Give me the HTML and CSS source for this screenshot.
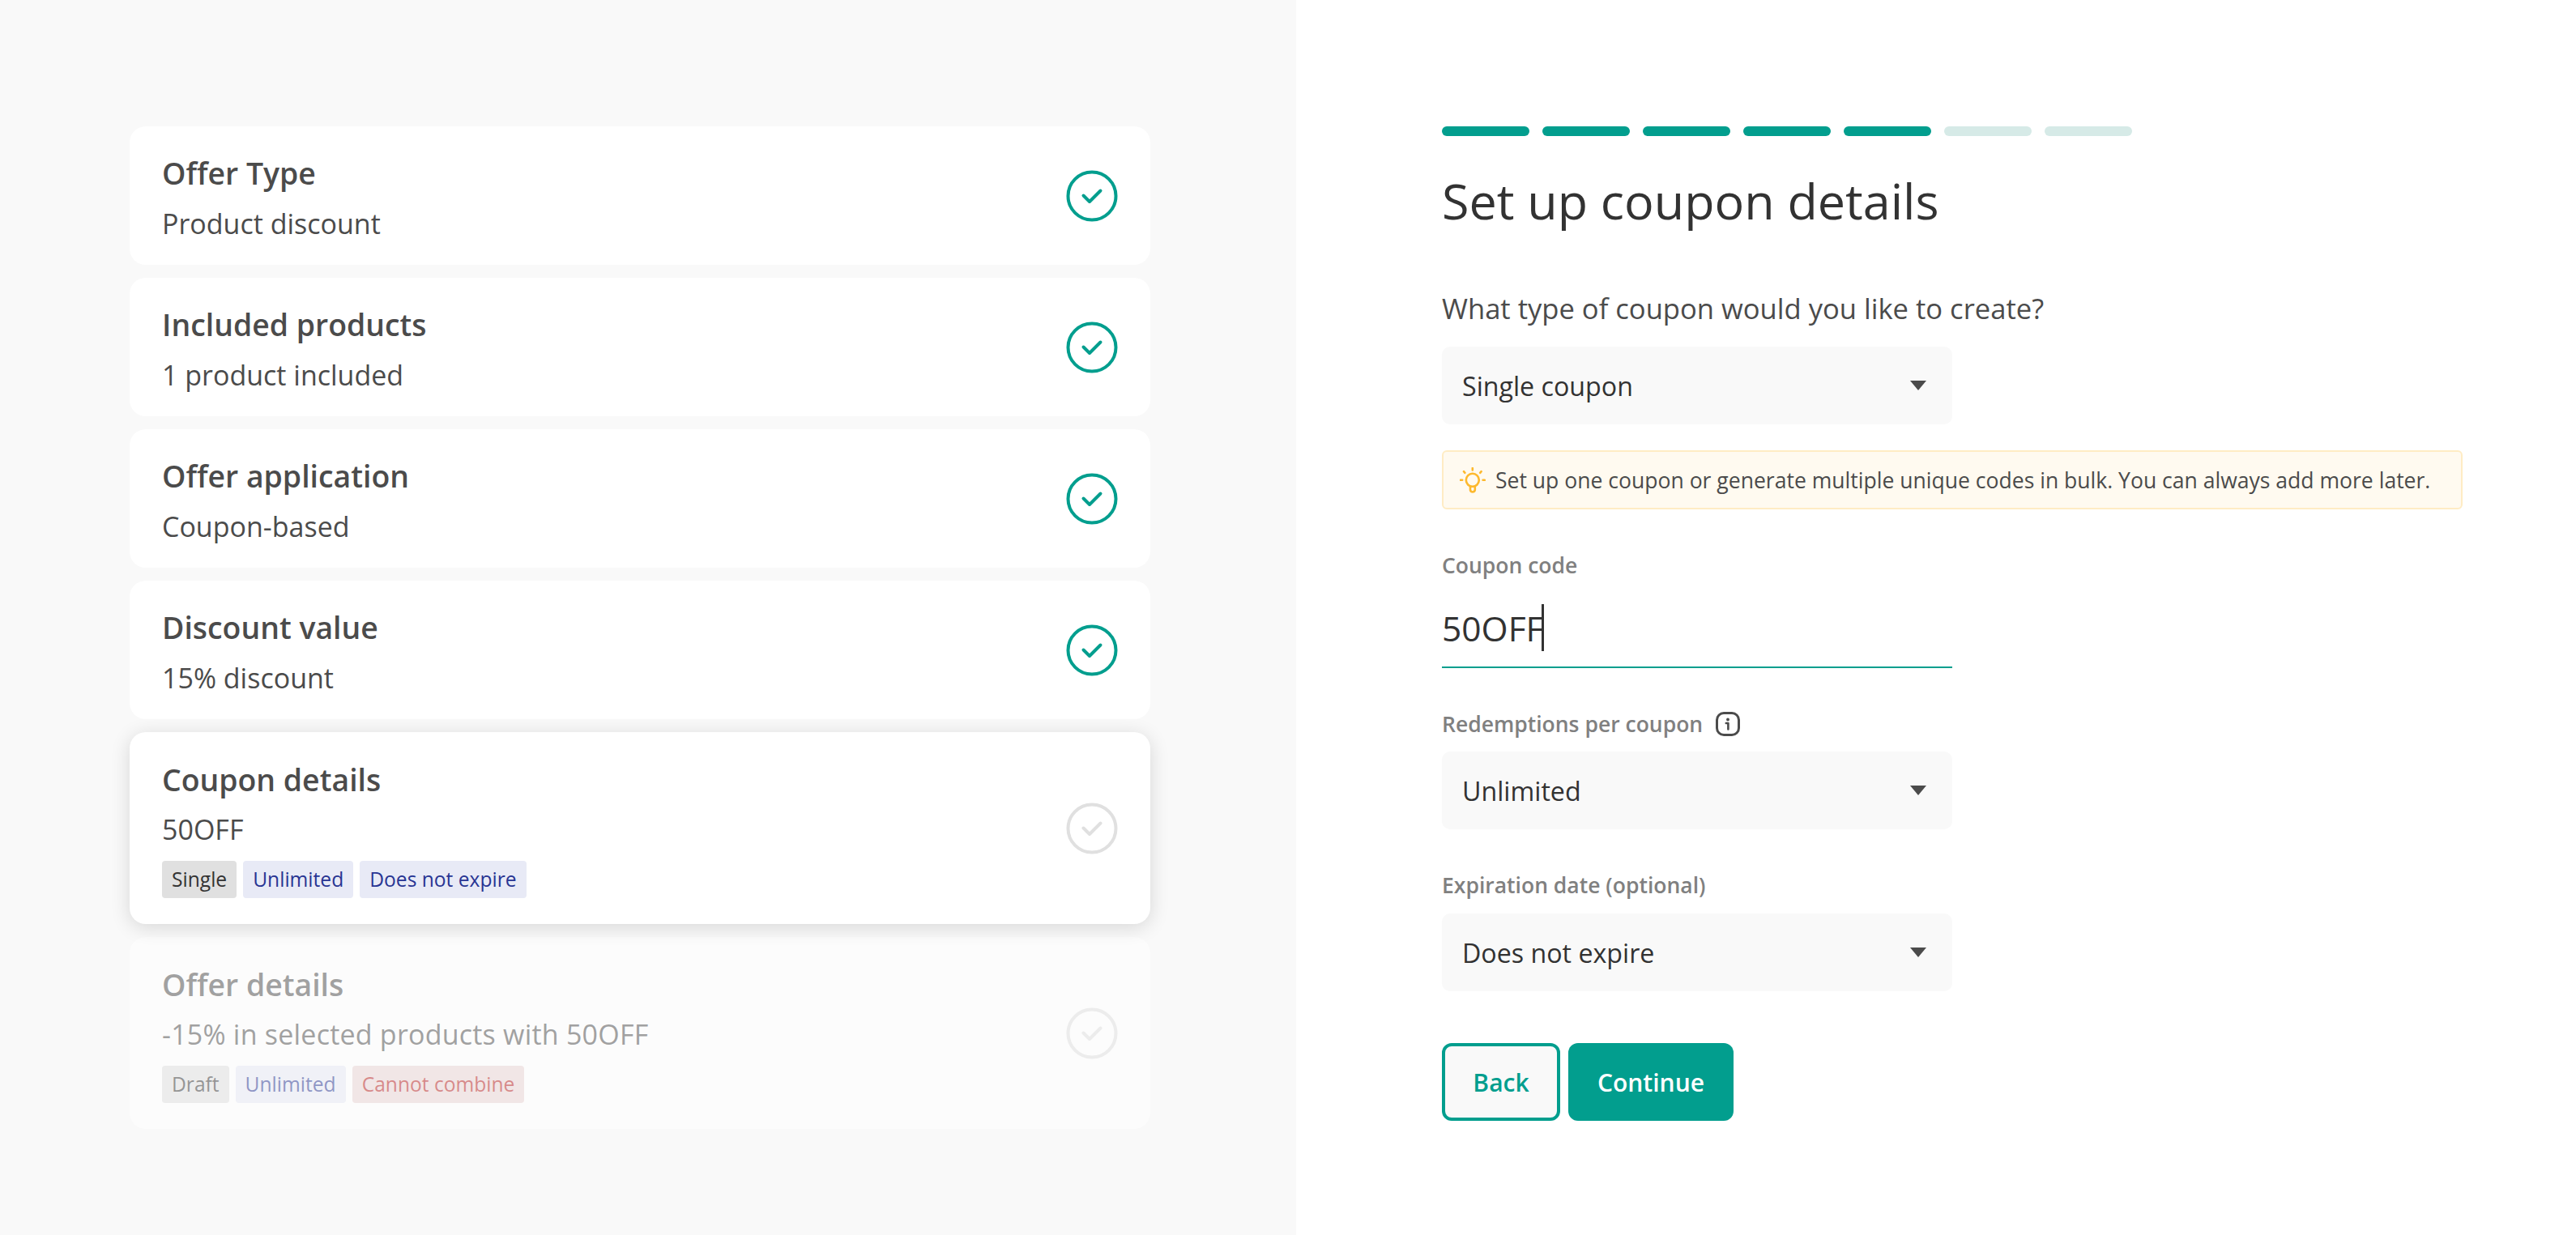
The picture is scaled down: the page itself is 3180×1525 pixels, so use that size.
FILE: index.html
```html
<!DOCTYPE html>
<html lang="en">
<head>
<meta charset="utf-8">
<title>Set up coupon details</title>
<link rel="stylesheet" href="styles.css">
</head>
<body>
<svg class="defs" width="0" height="0" aria-hidden="true">
  <symbol id="chk" viewBox="0 0 64 64">
    <circle cx="32" cy="32" r="29.5" fill="none" stroke="currentColor" stroke-width="4"/>
    <path d="M21.5 31.5 29 39 42.5 25.5" fill="none" stroke="currentColor" stroke-width="4" stroke-linecap="round" stroke-linejoin="round"/>
  </symbol>
  <symbol id="arrow" viewBox="0 0 20 12">
    <path d="M0 0H20L10 12Z" fill="#4b4b4b"/>
  </symbol>
</svg>
<main class="page">
  <section class="summary">
    <article class="card">
      <div class="card-body"><h2 class="card-title">Offer Type</h2><p class="card-sub">Product discount</p></div>
      <svg class="check"><use href="#chk"/></svg>
    </article>
    <article class="card">
      <div class="card-body"><h2 class="card-title">Included products</h2><p class="card-sub">1 product included</p></div>
      <svg class="check"><use href="#chk"/></svg>
    </article>
    <article class="card">
      <div class="card-body"><h2 class="card-title">Offer application</h2><p class="card-sub">Coupon-based</p></div>
      <svg class="check"><use href="#chk"/></svg>
    </article>
    <article class="card">
      <div class="card-body"><h2 class="card-title">Discount value</h2><p class="card-sub">15% discount</p></div>
      <svg class="check"><use href="#chk"/></svg>
    </article>
    <article class="card card-active">
      <div class="card-body">
        <h2 class="card-title">Coupon details</h2><p class="card-sub">50OFF</p>
        <div class="tags"><span class="tag tag-grey">Single</span><span class="tag tag-blue">Unlimited</span><span class="tag tag-blue">Does not expire</span></div>
      </div>
      <svg class="check check-off"><use href="#chk"/></svg>
    </article>
    <article class="card card-active card-disabled">
      <div class="card-body">
        <h2 class="card-title">Offer details</h2><p class="card-sub card-sub-long">-15% in selected products with 50OFF</p>
        <div class="tags"><span class="tag tag-grey">Draft</span><span class="tag tag-blue">Unlimited</span><span class="tag tag-red">Cannot combine</span></div>
      </div>
      <svg class="check check-off"><use href="#chk"/></svg>
    </article>
  </section>
  <section class="form">
    <div class="steps">
      <span class="step step-on"></span><span class="step step-on"></span><span class="step step-on"></span><span class="step step-on"></span><span class="step step-on"></span><span class="step"></span><span class="step"></span>
    </div>
    <h1 class="heading">Set up coupon details</h1>
    <p class="question">What type of coupon would you like to create?</p>
    <div class="select"><span>Single coupon</span><svg class="arrow"><use href="#arrow"/></svg></div>
    <div class="hint">
      <svg class="bulb" viewBox="0 0 32 32" fill="none" stroke="#fdb92e" stroke-width="2.6" stroke-linecap="round" stroke-linejoin="round">
        <circle cx="15.8" cy="15.8" r="8"/>
        <path d="M13 24v4.2a3 3 0 0 0 5.8 0V24M15.8 1v2.4M1 15.8h2.2M28.6 15.8h2.2M5 5.2l1.4 1.6M26.6 5.2l-1.4 1.6"/>
      </svg>
      <span>Set up one coupon or generate multiple unique codes in bulk. You can always add more later.</span>
    </div>
    <label class="label label-code">Coupon code</label>
    <div class="input"><span>50OFF</span><i class="caret"></i></div>
    <label class="label label-red">Redemptions per coupon
      <svg class="info" viewBox="0 0 30 30" fill="none"><rect x="1.5" y="1.5" width="27" height="27" rx="8.5" stroke="#4b4b4b" stroke-width="3"/><circle cx="15" cy="9.5" r="1.9" fill="#4b4b4b"/><path d="M12.8 14H15.4V21.5" stroke="#4b4b4b" stroke-width="2.6" stroke-linecap="round" stroke-linejoin="round"/></svg>
    </label>
    <div class="select"><span>Unlimited</span><svg class="arrow"><use href="#arrow"/></svg></div>
    <label class="label label-exp">Expiration date (optional)</label>
    <div class="select"><span>Does not expire</span><svg class="arrow"><use href="#arrow"/></svg></div>
    <div class="actions">
      <button class="btn btn-back" type="button">Back</button>
      <button class="btn btn-next" type="button">Continue</button>
    </div>
  </section>
</main>
</body>
</html>
```

FILE: styles.css
```css
* { box-sizing: border-box; }
html, body { margin: 0; padding: 0; background: #fff; }
body { font-family: "Open Sans", "Noto Sans", sans-serif; color: #4b4b4b; overflow: hidden; }
.defs { position: absolute; }
.page { display: flex; width: 3180px; height: 1525px; }

.summary { width: 1600px; height: 1525px; background: #f9f9f9; padding: 156px 180px 0 160px; display: flex; flex-direction: column; gap: 16px; }
.card { display: flex; align-items: center; justify-content: space-between; height: 171px; padding: 0 40px; background: #fff; border-radius: 20px; }
.card-active { height: 237px; box-shadow: 0 4px 24px rgba(0,0,0,.14); z-index: 1; }
.card-disabled { opacity: .5; box-shadow: none; z-index: 0; }
.card-body { display: flex; flex-direction: column; margin-top: 4px; }
.card-active .card-body { margin-top: -1px; }
.card-title { margin: 0; font-size: 37.4px; line-height: 54px; font-weight: 600; }
.card-sub { margin: 10px 0 0; font-size: 34px; line-height: 50px; font-weight: 400; }
.card-active .card-sub { margin-top: 9px; }
.card-sub-long { letter-spacing: .22px; }
.check { width: 64px; height: 64px; color: #029e8e; flex: none; }
.check-off { color: #e0e0e0; }
.tags { display: flex; gap: 8px; margin-top: 14px; }
.tag { height: 46px; padding: 0 12px; border-radius: 4px; font-size: 24.6px; line-height: 45px; }
.tag-grey { background: #e0e0e0; color: #333; }
.tag-blue { background: #e8eaf6; color: #283593; }
.tag-red { background: #ebd5d5; color: #b71c1c; }

.form { flex: 1; padding: 156px 0 0 180px; display: flex; flex-direction: column; align-items: flex-start; }
.steps { display: flex; gap: 16px; }
.step { width: 108px; height: 12px; border-radius: 6px; background: #d6eae7; }
.step-on { background: #029e8e; }
.heading { margin: 38px 0 0; font-size: 61px; line-height: 84px; font-weight: 400; color: #323232; }
.question { margin: 66px 0 0; font-size: 34.6px; line-height: 50px; color: #4b4b4b; }
.select { display: flex; align-items: center; justify-content: space-between; width: 630px; height: 96px; margin-top: 22px; padding: 0 32px 0 25px; background: #f9f9f9; border-radius: 10px; font-size: 32.2px; color: #323232; }
.arrow { width: 20px; height: 12px; }
.hint { display: flex; align-items: center; gap: 12px; width: 1260px; height: 73px; margin-top: 32px; padding-left: 20px; background: #fffaf0; border: 2px solid #ffecc4; border-radius: 6px; font-size: 26.55px; color: #4b4b4b; }
.bulb { width: 32px; height: 32px; flex: none; }
.label { display: flex; align-items: center; gap: 16px; font-size: 26.5px; line-height: 40px; font-weight: 600; color: #808080; }
.label-code { margin-top: 49px; }
.input { display: flex; align-items: center; width: 630px; height: 87px; margin-top: 20px; padding-bottom: 11px; border-bottom: 2px solid #029e8e; font-size: 42.5px; color: #323232; }
.caret { width: 3px; height: 58px; margin-left: -3px; background: #323232; }
.label-red { margin-top: 49px; }
.label-red + .select { margin-top: 14px; }
.label-exp { margin-top: 49px; }
.label-exp + .select { margin-top: 15px; }
.info { width: 30px; height: 30px; }
.actions { display: flex; gap: 10px; margin-top: 64px; }
.btn { height: 96px; border-radius: 12px; font-family: inherit; font-size: 30px; font-weight: 600; padding: 0; }
.btn-back { width: 146px; background: #f9f9f9; border: 4px solid #029e8e; color: #029e8e; }
.btn-next { width: 204px; background: #029e8e; border: 0; color: #fff; }
```
